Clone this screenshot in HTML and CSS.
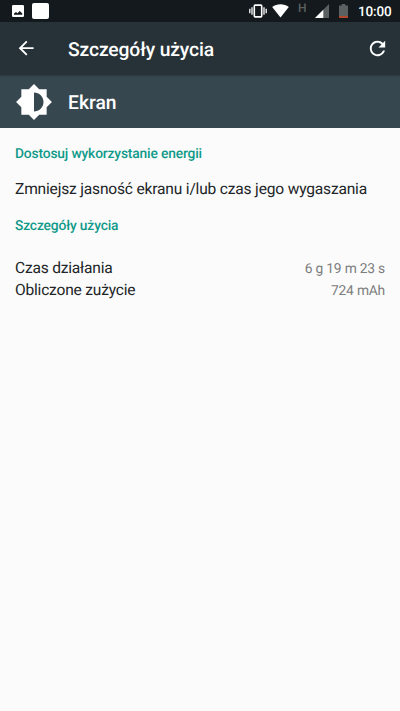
FILE: index.html
```html
<!DOCTYPE html>
<html lang="pl">
<head>
<meta charset="utf-8">
<title>Szczegóły użycia</title>
<link rel="stylesheet" href="styles.css">
</head>
<body>
<div class="status">
  <svg class="pic" width="12" height="12" viewBox="0 0 12 12"><rect width="12" height="12" rx="1.2" fill="#fff"/><path d="M2 9.800V8.500L4 7l1.400 1.200L7.800 6l2.500 2.500v1.300z" fill="#13191c"/></svg>
  <span class="square"></span>
  <span class="grow"></span>
  <svg class="vibrate" width="18" height="16" viewBox="0 0 18 16"><rect x="5.3" y="2.1" width="7.4" height="11.8" rx=".8" fill="none" stroke="#fff" stroke-width="1.6"/><path d="M.8 5.8v4.4M3 4.2v7.6M15 4.2v7.6M17.2 5.8v4.4" stroke="#fff" stroke-width="1.3"/></svg>
  <svg class="wifi" width="17" height="14" viewBox="0 0 17 14"><path d="M8.5 13.6L.2 3.1C2.6 1.2 5.4.3 8.5.3s5.9.9 8.3 2.8z" fill="#fff"/></svg>
  <span class="net">H</span>
  <svg class="signal" width="14" height="14" viewBox="0 0 14 14"><path d="M14 0v14H0z" fill="#5b6062"/><path d="M8.3 5.7V14H0z" fill="#fff"/></svg>
  <svg class="battery" width="9" height="14" viewBox="0 0 9 14"><path d="M2.7 0h3.6v1.4H9V14H0V1.4h2.7z" fill="#5b6062"/><path d="M0 12h9v2H0z" fill="#b4482c"/></svg>
  <span class="clock">10:00</span>
</div>
<div class="toolbar">
  <svg class="back" width="22.3" height="22.3" viewBox="0 0 24 24"><path d="M20 11H7.830l5.590-5.590L12 4l-8 8 8 8 1.410-1.410L7.830 13H20v-2z" fill="#fff"/></svg>
  <h1>Szczegóły użycia</h1>
  <svg class="refresh" width="23" height="23" viewBox="0 0 24 24"><path d="M17.650 6.350C16.200 4.900 14.210 4 12 4c-4.420 0-7.990 3.580-7.990 8s3.570 8 7.990 8c3.730 0 6.840-2.550 7.730-6h-2.080c-.820 2.330-3.040 4-5.650 4-3.310 0-6-2.690-6-6s2.690-6 6-6c1.660 0 3.140.690 4.220 1.780L13 11h7V4l-2.350 2.350z" fill="#fff"/></svg>
</div>
<div class="app">
  <svg class="bright" width="38" height="38" viewBox="0 0 24 24"><path d="M20 15.310L23.310 12 20 8.690V4h-4.690L12 .690 8.690 4H4v4.690L.690 12 4 15.310V20h4.690L12 23.310 15.310 20H20v-4.690zM12 18V6c3.310 0 6 2.690 6 6s-2.690 6-6 6z" fill="#fff"/></svg>
  <h2>Ekran</h2>
</div>
<main>
  <h3>Dostosuj wykorzystanie energii</h3>
  <p>Zmniejsz jasność ekranu i/lub czas jego wygaszania</p>
  <h3>Szczegóły użycia</h3>
  <dl>
    <div><dt>Czas działania</dt><dd>6 g 19 m 23 s</dd></div>
    <div><dt>Obliczone zużycie</dt><dd>724 mAh</dd></div>
  </dl>
</main>
</body>
</html>
```
FILE: styles.css
```css
* { box-sizing: border-box; margin: 0; padding: 0; }
body { background: #fbfbfb; color: #212527; font-family: Roboto, sans-serif; height: 711px; overflow: hidden; text-rendering: geometricPrecision; }
svg { display: block; flex: none; }
.status { display: flex; height: 22px; background: #13191c; padding-right: 9px; color: #fff; }
.pic { margin: 5px 0 0 12px; }
.square { width: 16.4px; height: 16px; margin: 3px 0 0 8.3px; border-radius: 2px; background: #fff; }
.grow { flex: 1; }
.vibrate { margin: 3px 5px 0 0; }
.wifi { margin: 4px 10px 0 0; }
.net { font-size: 12px; line-height: 16px; color: #5b6062; font-weight: 500; width: 8px; margin: 0 9px 0 -1px; }
.signal { margin: 4px 10px 0 0; }
.battery { margin: 4px 10px 0 0; }
.clock { font-size: 13.5px; line-height: 24px; font-weight: 500; width: 33px; letter-spacing: -.15px; white-space: nowrap; }
.toolbar { display: flex; align-items: center; height: 53px; background: #273238; color: #fff; padding: 0 11.5px 0 15px; }
.toolbar h1 { flex: 1; margin-left: 30.7px; font-size: 19.3px; letter-spacing: -.12px; line-height: 24px; font-weight: 500; padding-top: 2px; }
.app { display: flex; align-items: center; height: 53px; background: #37474f; color: #fff; padding-left: 15px; box-shadow: inset 0 2px 2px -1px #2c393f; }
.app h2 { margin-left: 15px; font-size: 19.3px; line-height: 24px; font-weight: 500; padding-top: 2px; }
main { padding: 16px 15px 0; }
h3 { color: #109a8a; font-size: 13.8px; letter-spacing: -.16px; line-height: 20px; font-weight: 500; }
p { font-size: 15.55px; letter-spacing: -.18px; line-height: 22px; margin: 14px 0 16px; white-space: nowrap; }
dl { margin-top: 21px; }
dl div { display: flex; justify-content: space-between; align-items: center; height: 22px; }
dt { font-size: 15.55px; letter-spacing: -.2px; }
dd { font-size: 13.8px; letter-spacing: -.2px; color: #7b7d7e; padding-top: 1px; }
```
